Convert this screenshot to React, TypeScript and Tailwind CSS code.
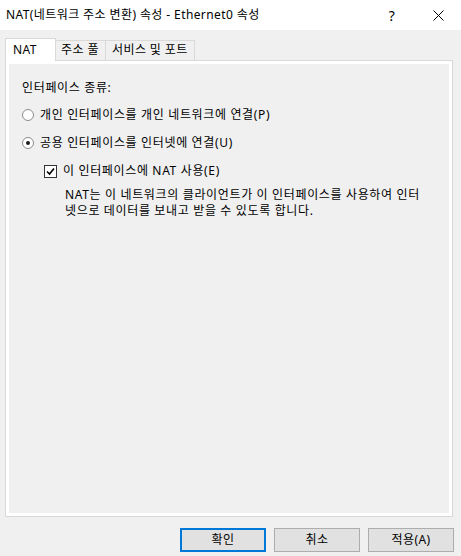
import React from 'react'

const font = { fontFamily: '"Noto Sans", "Noto Sans CJK KR", sans-serif' }

function Radio({ checked }: { checked?: boolean }) {
  return (
    <span className="w-[12px] h-[12px] rounded-full border border-[#8c8c8c] bg-white flex items-center justify-center flex-shrink-0">
      {checked && <span className="w-[4px] h-[4px] rounded-full bg-[#1a1a1a]" />}
    </span>
  )
}

function Checkbox({ checked }: { checked?: boolean }) {
  return (
    <span className="w-[13px] h-[13px] border border-[#333333] bg-white flex items-center justify-center flex-shrink-0">
      {checked && (
        <svg width="9" height="9" viewBox="0 0 9 9">
          <path d="M1 4.5 L3.5 7 L8 1.5" fill="none" stroke="#000" strokeWidth="1.6" />
        </svg>
      )}
    </span>
  )
}

export default function App() {
  return (
    <div className="w-[461px] h-[556px] bg-[#f0f0f0] flex flex-col text-[12px] tracking-[0.4px] text-black" style={font}>
      {/* Title bar */}
      <div className="h-[30px] bg-white flex items-center">
        <span className="pl-[6px] flex-1 leading-[16px]">NAT(네트워크 주소 변환) 속성 - Ethernet0 속성</span>
        <span className="w-[46px] text-center text-[14px]">?</span>
        <span className="w-[46px] flex items-center justify-center">
          <svg width="11" height="11" viewBox="0 0 11 11">
            <path d="M0.5 0.5 L10.5 10.5 M10.5 0.5 L0.5 10.5" stroke="#000" strokeWidth="1" />
          </svg>
        </span>
      </div>

      {/* Tabs */}
      <div className="mt-[8px] ml-[5px] flex items-end h-[22px]">
        <div className="w-[51px] h-[23px] bg-white border border-b-0 border-[#d9d9d9] pl-[7px] pt-[3px] leading-[16px] relative z-10 -mb-px">
          NAT
        </div>
        <div className="w-[50px] h-[20px] border border-b-0 border-l-0 border-[#d9d9d9] pl-[5px] pt-[1px] leading-[16px]">
          주소 풀
        </div>
        <div className="w-[89px] h-[20px] border border-b-0 border-l-0 border-[#d9d9d9] pl-[6px] pt-[1px] leading-[16px] whitespace-nowrap">
          서비스 및 포트
        </div>
      </div>

      {/* Tab panel */}
      <div className="ml-[5px] w-[448px] h-[457px] border border-[#d9d9d9] bg-white p-[3px]">
        <div className="h-full bg-[#f0f0f0] flex flex-col leading-[16px] tracking-[0.65px] pt-[16px] pl-[13px]">
          <div>인터페이스 종류:</div>
          <div className="mt-[11px] flex items-center gap-[6px]">
            <Radio />
            <span>개인 인터페이스를 개인 네트워크에 연결(P)</span>
          </div>
          <div className="mt-[12px] flex items-center gap-[6px]">
            <Radio checked />
            <span>공용 인터페이스를 인터넷에 연결(U)</span>
          </div>
          <div className="mt-[12px] ml-[22px] flex items-center gap-[6px]">
            <Checkbox checked />
            <span>이 인터페이스에 NAT 사용(E)</span>
          </div>
          <div className="mt-[8px] ml-[43px] whitespace-nowrap">
            NAT는 이 네트워크의 클라이언트가 이 인터페이스를 사용하여 인터
            <br />
            넷으로 데이터를 보내고 받을 수 있도록 합니다.
          </div>
        </div>
      </div>

      {/* Buttons */}
      <div className="mt-[11px] flex justify-end gap-[8px] pr-[7px]">
        <button className="w-[86px] h-[24px] bg-[#e1e1e1] border-2 border-[#0078d7] leading-[16px]">확인</button>
        <button className="w-[86px] h-[24px] bg-[#e1e1e1] border border-[#adadad] leading-[16px]">취소</button>
        <button className="w-[86px] h-[24px] bg-[#e1e1e1] border border-[#adadad] leading-[16px]">적용(A)</button>
      </div>
    </div>
  )
}
